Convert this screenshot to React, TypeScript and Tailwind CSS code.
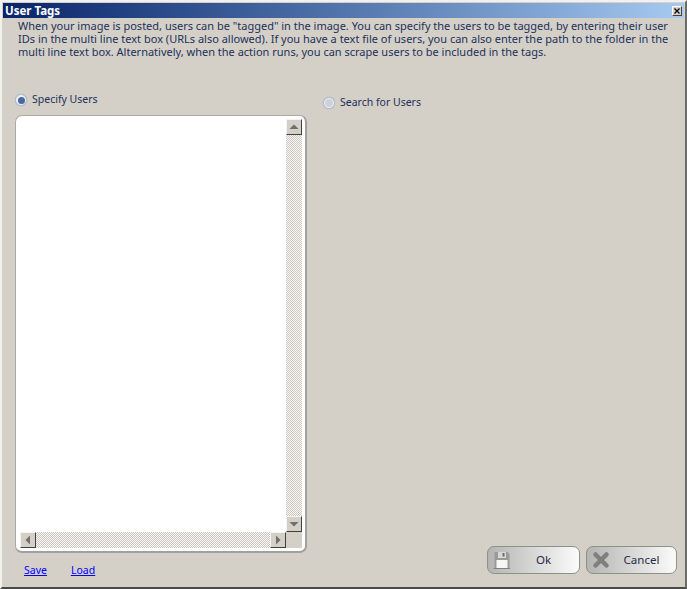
import React from "react";

const check = "bg-[repeating-conic-gradient(#cbc8c2_0%_25%,#f8f7f5_0%_50%)] bg-[length:2px_2px]";

function ScrollBtn({ dir }: { dir: "up" | "down" | "left" | "right" }) {
  const pts = {
    up: "3.5,10 8,5.5 12.5,10",
    down: "3.5,6 12.5,6 8,10.5",
    left: "10,3.5 10,12.5 5.5,8",
    right: "6,3.5 6,12.5 10.5,8",
  }[dir];
  return (
    <div className="w-4 h-4 shrink-0 bg-[#d4d0c8] border-t border-l border-t-[#f4f3f0] border-l-[#f4f3f0] border-r border-b border-r-[#404040] border-b-[#404040]">
      <svg width="14" height="14" viewBox="1 1 14 14"><polygon points={pts} fill="#6f6f6d" /></svg>
    </div>
  );
}

function Radio({ on }: { on?: boolean }) {
  return (
    <span className="w-[12px] h-[12px] rounded-full bg-[#eef0f5] border border-[#b3bdd0] flex items-center justify-center shadow-[0_0_1px_#8fa6cc]">
      {on ? <span className="w-[7px] h-[7px] rounded-full bg-[#4a6a9c]" /> : <span className="w-[8px] h-[8px] rounded-full bg-[#cfd2d4]" />}
    </span>
  );
}

function DialogButton({ label, icon, w }: { label: string; icon: React.ReactNode; w: string }) {
  return (
    <button className={`${w} h-[28px] rounded-[7px] border border-[#8f8f8c] bg-gradient-to-r from-[#b4b4b2] to-[#fbfbfb] flex items-center text-[11.5px] text-[#1f2c48]`}>
      <span className="ml-[4px] w-[20px] h-[20px] flex items-center justify-center">{icon}</span>
      <span className="flex-1 text-center pl-[8px] pr-[12px]">{label}</span>
    </button>
  );
}

export default function App() {
  return (
    <div className="w-[687px] h-[589px] bg-[#d4d0c8] border-t-2 border-l-2 border-t-[#f2f1ee] border-l-[#f2f1ee] border-r-2 border-b-2 border-r-[#6a6a68] border-b-[#4a4a48] p-px flex flex-col overflow-hidden font-['Noto_Sans',sans-serif] text-[10.5px] text-[#22305a]">
      <div className="h-[15px] shrink-0 bg-gradient-to-r from-[#0a246a] to-[#a6caf0] flex items-center justify-between pl-[2px] pr-[2px]">
        <span className="text-white font-bold text-[11.5px] leading-none">User Tags</span>
        <span className="w-[10px] h-[10px] bg-[#d4d0c8] border border-t-white border-l-white border-r-[#404040] border-b-[#404040] flex items-center justify-center">
          <svg width="6" height="6" viewBox="0 0 6 6"><path d="M0.5 0.5 L5.5 5.5 M5.5 0.5 L0.5 5.5" stroke="#000" strokeWidth="1.2" /></svg>
        </span>
      </div>
      <p className="ml-[15px] whitespace-nowrap leading-[13px] text-[11px] mt-[1px] h-[42px] shrink-0">
        When your image is posted, users can be "tagged" in the image. You can specify the users to be tagged, by entering their user<br />
        IDs in the multi line text box (URLs also allowed). If you have a text file of users, you can also enter the path to the folder in the<br />
        multi line text box. Alternatively, when the action runs, you can scrape users to be included in the tags.
      </p>
      <div className="flex-1 flex min-h-0 mt-[32px]">
        <div className="w-[320px] shrink-0 pl-[12px] flex flex-col">
          <label className="flex items-center gap-[5px] h-[14px]"><Radio on /> <span>Specify Users</span></label>
          <div className="mt-[8px] w-[292px] h-[438px] rounded-[7px] bg-white border-t border-l border-t-[#a8a8a4] border-l-[#a8a8a4] border-r-2 border-b-2 border-r-[#a0a09c] border-b-[#a0a09c] pt-[3px] pl-[4px] pr-[3px] pb-[3px] flex flex-col">
            <div className="flex-1 min-h-0 flex">
              <div className="flex-1 bg-white" />
              <div className="w-4 flex flex-col">
                <ScrollBtn dir="up" />
                <div className={`flex-1 ${check}`} />
                <ScrollBtn dir="down" />
              </div>
            </div>
            <div className="h-4 flex shrink-0">
              <ScrollBtn dir="left" />
              <div className={`flex-1 ${check}`} />
              <ScrollBtn dir="right" />
              <div className="w-4 bg-[#d4d0c8]" />
            </div>
          </div>
          <div className="flex gap-[24px] pl-[9px] mt-[10px] text-[#0000ff] underline">
            <a>Save</a>
            <a>Load</a>
          </div>
        </div>
        <div className="flex-1 flex flex-col pr-[7px]">
          <label className="flex items-center gap-[5px] h-[14px] mt-[3px]"><Radio /> <span>Search for Users</span></label>
          <div className="flex-1" />
          <div className="flex justify-end gap-[6px] mb-[12px]">
            <DialogButton label="Ok" w="w-[93px]" icon={
              <svg width="18" height="18" viewBox="0 0 18 18"><path d="M1.5 1H14.5L16.5 3V17H1.5Z" fill="#9a9a98" /><rect x="5" y="1" width="8" height="6" fill="#d8d8d6" /><rect x="9.5" y="2" width="2" height="3.5" fill="#6a6a68" /><rect x="3.5" y="9" width="11" height="8" fill="#f6f6f4" /><path d="M0.5 17.5H17" stroke="#808080" /></svg>
            } />
            <DialogButton label="Cancel" w="w-[91px]" icon={
              <svg width="18" height="18" viewBox="0 0 18 18"><path d="M3.5 3.5L14.5 14.5M14.5 3.5L3.5 14.5" stroke="#7f7f7d" strokeWidth="4.5" strokeLinecap="round" /></svg>
            } />
          </div>
        </div>
      </div>
    </div>
  );
}
